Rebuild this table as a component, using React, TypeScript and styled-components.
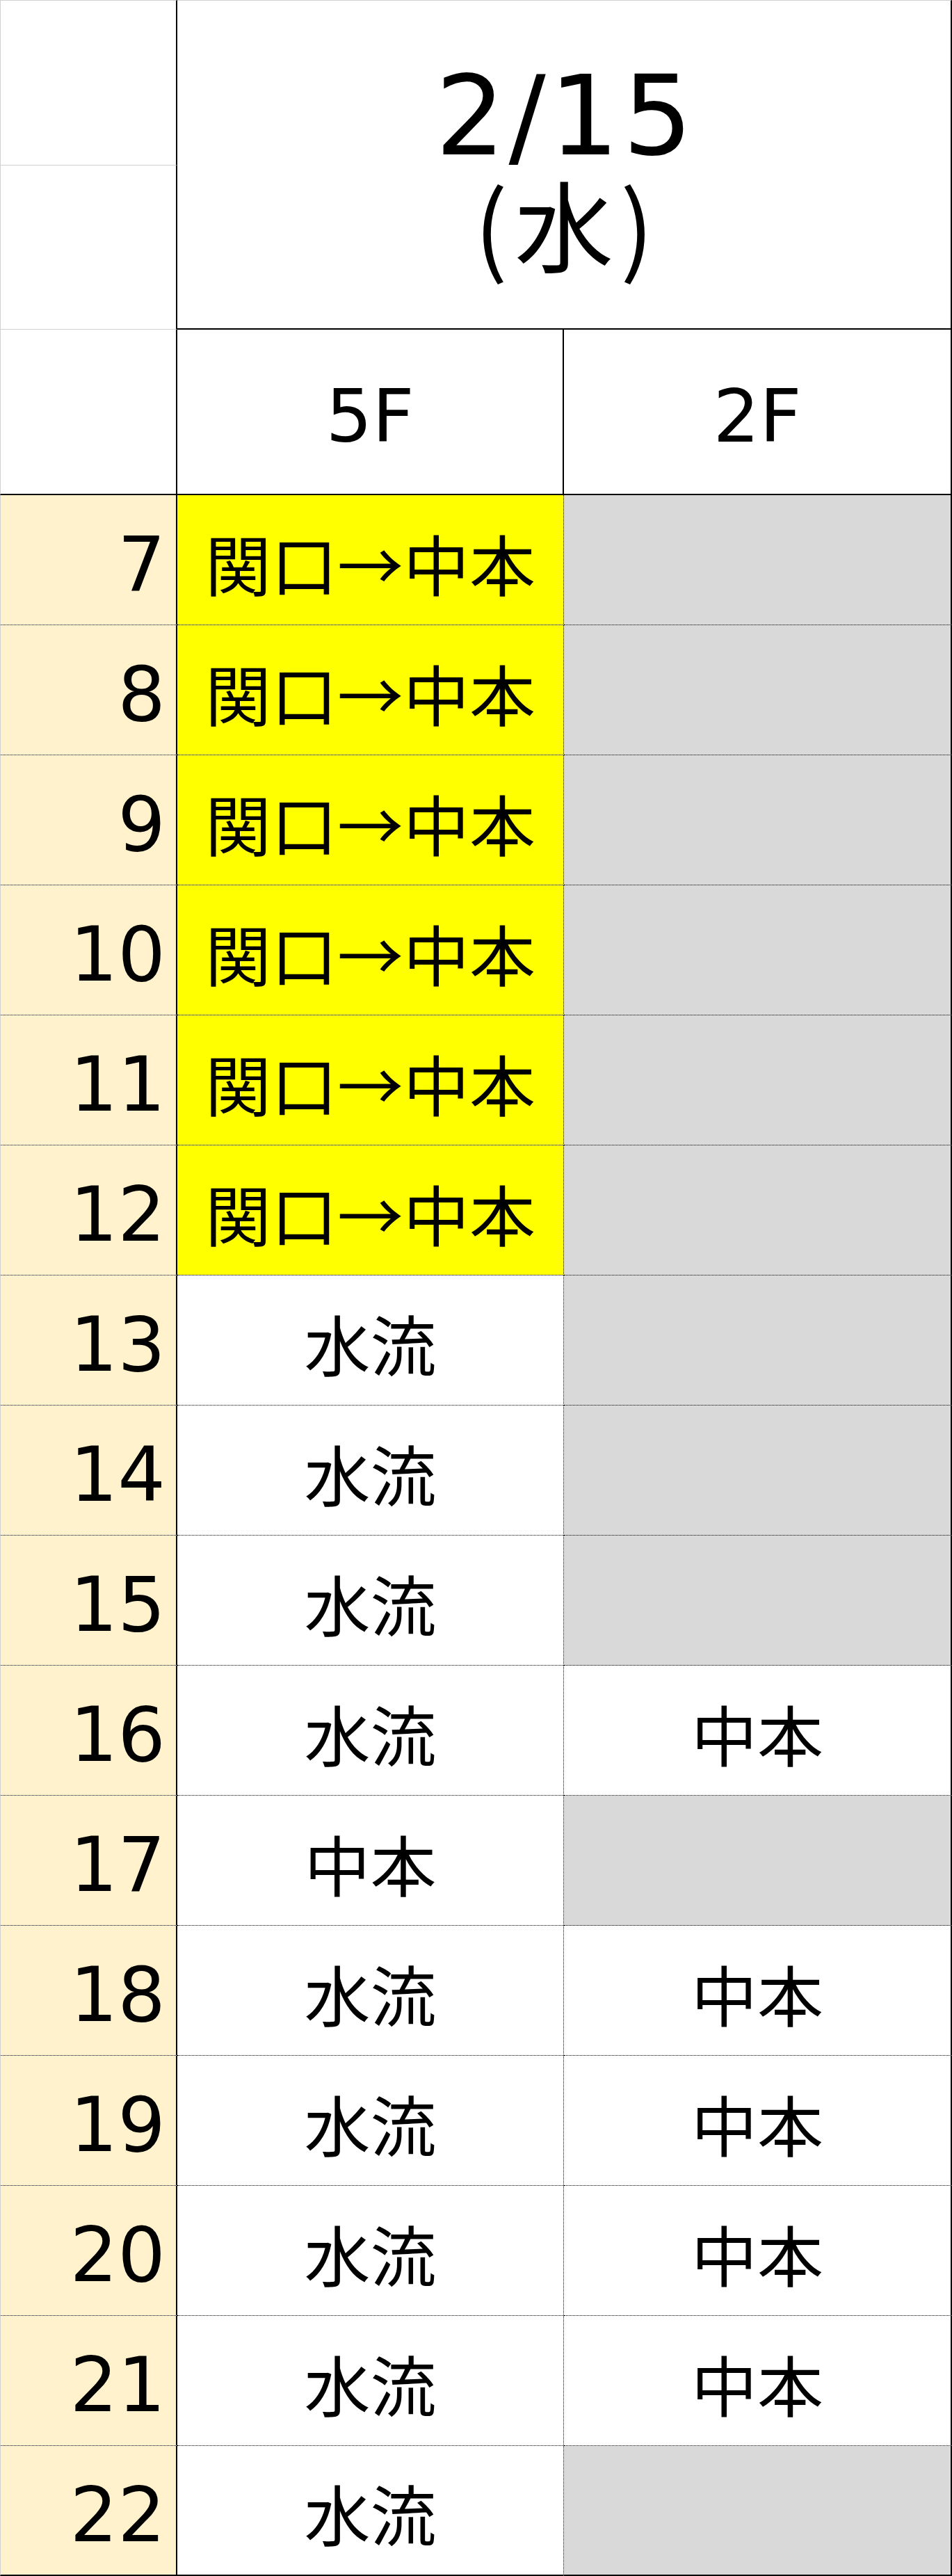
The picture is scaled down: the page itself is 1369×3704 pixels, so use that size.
import React from 'react';
import styled, { createGlobalStyle, css } from 'styled-components';

const GlobalStyle = createGlobalStyle`
  html, body { margin: 0; padding: 0; background: #ffffff; }
  body { font-family: "Noto Sans CJK JP", sans-serif; color: #000; }
`;

const GRIDLINE = '#d0d0d0';
const INK = '#000000';

type Fill = 'yellow' | 'gray' | 'white';
const fills: Record<Fill, string> = {
  yellow: '#ffff00',
  gray: '#d9d9d9',
  white: '#ffffff',
};

const Sheet = styled.div`
  display: grid;
  grid-template-columns: 255px 556px 558px;
  grid-template-rows: 238px 236px 238px repeat(16, 187px);
  width: 1369px;
  box-sizing: border-box;
`;

const Corner = styled.div<{ $top?: boolean; $thickBottom?: boolean }>`
  box-sizing: border-box;
  border-left: 1px solid ${GRIDLINE};
  border-right: 2px solid ${INK};
  ${(p) => (p.$top ? css`border-top: 1px solid ${GRIDLINE};` : '')}
  border-bottom: ${(p) => (p.$thickBottom ? `2px solid ${INK}` : `1px solid ${GRIDLINE}`)};
`;

const DateCell = styled.div`
  grid-column: 2 / span 2;
  grid-row: 1 / span 2;
  box-sizing: border-box;
  border-top: 1px solid ${GRIDLINE};
  border-right: 2px solid ${INK};
  border-bottom: 2px solid ${INK};
  display: flex;
  flex-direction: column;
  align-items: center;
  justify-content: center;
`;

const DateNumber = styled.div`
  font-family: "DejaVu Sans", sans-serif;
  font-size: 158px;
  line-height: 160px;
  letter-spacing: 5px;
  margin-right: -5px;
`;

const Weekday = styled.div`
  font-family: "Noto Sans CJK JP", sans-serif;
  font-size: 142px;
  line-height: 135px;
  margin-top: 5px;
  letter-spacing: 10px;
  margin-right: -10px;
`;

const FloorCell = styled.div`
  box-sizing: border-box;
  border-bottom: 2px solid ${INK};
  border-right: 2px solid ${INK};
  display: flex;
  align-items: center;
  justify-content: center;
  padding-top: 14px;
  font-family: "DejaVu Sans", sans-serif;
  font-size: 105px;
  line-height: 1;
`;

const HourCell = styled.div<{ $last?: boolean }>`
  box-sizing: border-box;
  background: #fff2cc;
  border-left: 1px solid ${GRIDLINE};
  border-right: 2px solid ${INK};
  border-bottom: ${(p) => (p.$last ? `2px solid ${INK}` : `1px dotted ${INK}`)};
  display: flex;
  align-items: center;
  justify-content: flex-end;
  padding: 14px 15px 0 0;
  font-family: "DejaVu Sans", sans-serif;
  font-size: 108px;
  line-height: 1;
`;

const ShiftCell = styled.div<{ $fill: Fill; $last?: boolean; $outer?: boolean }>`
  box-sizing: border-box;
  background: ${(p) => fills[p.$fill]};
  border-bottom: ${(p) => (p.$last ? `2px solid ${INK}` : `1px dotted ${INK}`)};
  border-right: ${(p) => (p.$outer ? `2px solid ${INK}` : `1px dotted ${INK}`)};
  display: flex;
  align-items: center;
  justify-content: center;
  padding-top: 6px;
  font-family: "Noto Sans CJK JP", sans-serif;
  font-size: 95px;
  line-height: 1;
  white-space: nowrap;
`;

type Row = { hour: number; f5: string; f5fill: Fill; f2: string; f2fill: Fill };

const MOVE = '関口→中本';
const rows: Row[] = [
  ...[7, 8, 9, 10, 11, 12].map((h) => ({ hour: h, f5: MOVE, f5fill: 'yellow' as Fill, f2: '', f2fill: 'gray' as Fill })),
  { hour: 13, f5: '水流', f5fill: 'white', f2: '', f2fill: 'gray' },
  { hour: 14, f5: '水流', f5fill: 'white', f2: '', f2fill: 'gray' },
  { hour: 15, f5: '水流', f5fill: 'white', f2: '', f2fill: 'gray' },
  { hour: 16, f5: '水流', f5fill: 'white', f2: '中本', f2fill: 'white' },
  { hour: 17, f5: '中本', f5fill: 'white', f2: '', f2fill: 'gray' },
  { hour: 18, f5: '水流', f5fill: 'white', f2: '中本', f2fill: 'white' },
  { hour: 19, f5: '水流', f5fill: 'white', f2: '中本', f2fill: 'white' },
  { hour: 20, f5: '水流', f5fill: 'white', f2: '中本', f2fill: 'white' },
  { hour: 21, f5: '水流', f5fill: 'white', f2: '中本', f2fill: 'white' },
  { hour: 22, f5: '水流', f5fill: 'white', f2: '', f2fill: 'gray' },
];

export default function App() {
  return (
    <>
      <GlobalStyle />
      <Sheet>
        <Corner $top />
        <DateCell>
          <DateNumber>2/15</DateNumber>
          <Weekday>(水)</Weekday>
        </DateCell>
        <Corner />
        <Corner $thickBottom />
        <FloorCell>5F</FloorCell>
        <FloorCell>2F</FloorCell>
        {rows.map((r, i) => {
          const last = i === rows.length - 1;
          return (
            <React.Fragment key={r.hour}>
              <HourCell $last={last}>{r.hour}</HourCell>
              <ShiftCell $fill={r.f5fill} $last={last}>{r.f5}</ShiftCell>
              <ShiftCell $fill={r.f2fill} $last={last} $outer>{r.f2}</ShiftCell>
            </React.Fragment>
          );
        })}
      </Sheet>
    </>
  );
}
